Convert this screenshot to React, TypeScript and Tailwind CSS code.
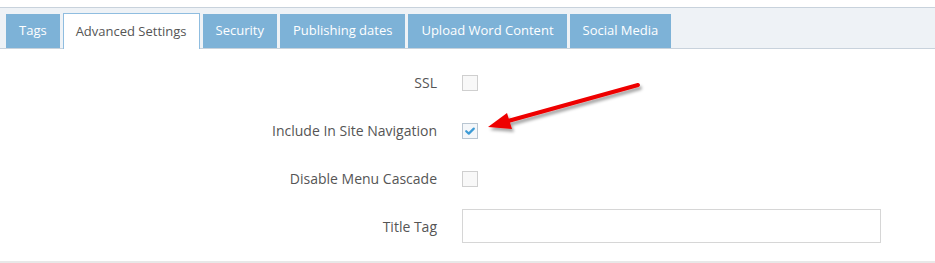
import React from 'react'

const TABS = ['Tags', 'Advanced Settings', 'Security', 'Publishing dates', 'Upload Word Content', 'Social Media']
const ACTIVE = 'Advanced Settings'

const font = { fontFamily: '"Open Sans", "Liberation Sans", sans-serif' }

function Checkbox({ checked = false }: { checked?: boolean }) {
  return (
    <div
      className={`w-4 h-4 border ${checked ? 'border-[#b9c6d2] bg-[#f4f7fa]' : 'border-[#cfcfcf] bg-[#f8f8f8]'} flex items-center justify-center`}
    >
      {checked && (
        <svg width="12" height="12" viewBox="0 0 12 12">
          <path d="M2.2 6.2 L4.8 8.6 L9.8 3.6" fill="none" stroke="#3d9bd6" strokeWidth="2.2" strokeLinecap="round" strokeLinejoin="round" />
        </svg>
      )}
    </div>
  )
}

function Row({ label, children, className = '' }: { label: string; children: React.ReactNode; className?: string }) {
  return (
    <div className={`grid grid-cols-[437px_1fr] gap-x-[25px] items-center ${className}`}>
      <div className="text-right text-[14px] text-[#555]">{label}</div>
      <div>{children}</div>
    </div>
  )
}

export default function App() {
  return (
    <div className="relative w-[935px] h-[263px] bg-white pt-[7px] overflow-hidden" style={font}>
      {/* Tabs */}
      <div className="h-[42px] border-y border-[#c8d2dc] bg-[#eef2f6] flex items-end pl-[6px] gap-[3px]">
        {TABS.map((tab) =>
          tab === ACTIVE ? (
            <div
              key={tab}
              className="relative z-10 -mb-px h-[36px] px-[12px] bg-white border border-b-0 border-[#8fbde0] flex items-center text-[13px] text-[#555]"
            >
              {tab}
            </div>
          ) : (
            <div key={tab} className="h-[34px] px-[13px] bg-[#7db2d7] flex items-center text-[13px] text-white">
              {tab}
            </div>
          )
        )}
      </div>

      {/* Form */}
      <div className="h-[214px] border-b-2 border-[#e8e8e8] pt-[23px] flex flex-col">
        <Row label="SSL" className="h-4">
          <Checkbox />
        </Row>
        <Row label="Include In Site Navigation" className="h-4 mt-[32px]">
          <Checkbox checked />
        </Row>
        <Row label="Disable Menu Cascade" className="h-4 mt-[32px]">
          <Checkbox />
        </Row>
        <Row label="Title Tag" className="h-[34px] mt-[25px]">
          <input className="w-[419px] h-[34px] border border-[#d6d6d6] bg-white outline-none px-2 text-[13px]" />
        </Row>
      </div>

      {/* Red annotation arrow */}
      <svg className="absolute left-[480px] top-[75px]" width="175" height="70" viewBox="0 0 175 70">
        <defs>
          <filter id="sh" x="-20%" y="-50%" width="140%" height="200%">
            <feDropShadow dx="2" dy="3" stdDeviation="1.8" floodColor="#000" floodOpacity="0.35" />
          </filter>
        </defs>
        <g filter="url(#sh)">
          <line x1="158" y1="10" x2="28" y2="46" stroke="#ee0000" strokeWidth="4" strokeLinecap="round" />
          <polygon points="8,52 27,38 32,54" fill="#ee0000" />
        </g>
      </svg>
    </div>
  )
}
